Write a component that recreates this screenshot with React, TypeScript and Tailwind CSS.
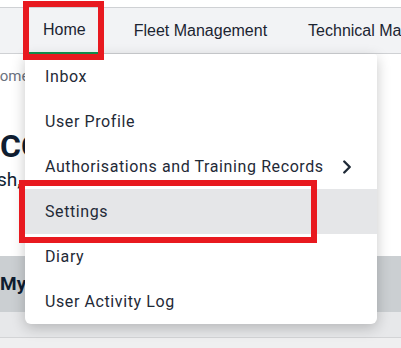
import { ChevronRight } from 'lucide-react';

const menuItems = [
  { label: 'Inbox' },
  { label: 'User Profile' },
  { label: 'Authorisations and Training Records', submenu: true },
  { label: 'Settings', active: true },
  { label: 'Diary' },
  { label: 'User Activity Log' },
];

export default function App() {
  return (
    <div className="relative h-[348px] w-[401px] overflow-hidden bg-white">
      {/* Top nav */}
      <div className="h-[7px] bg-white" />
      <nav className="flex h-[47px] items-center border-y border-[#cfd1d4] bg-[#f2f3f5] pl-[29px] font-['Liberation_Sans',Arial,sans-serif] text-[16px] text-[#1b2431]">
        <div className="-mb-px flex h-[46px] items-center border-b-2 border-[#12924f] px-[14px]">Home</div>
        <div className="ml-[20px] flex h-full items-center whitespace-nowrap px-[14px]">Fleet Management</div>
        <div className="ml-[13px] flex h-full items-center whitespace-nowrap px-[14px]">Technical Management</div>
      </nav>

      {/* Page content, partly hidden by the menu */}
      <main className="font-['Roboto',sans-serif] text-[#0f1d31]">
        <div className="-ml-[11px] mt-[12px] text-[15px] leading-[20px] text-[#6b7280]">Home</div>
        <h1 className="mt-[40px] whitespace-nowrap text-[32px] font-bold leading-[40px]">COMMAND</h1>
        <p className="-ml-[3px] whitespace-nowrap text-[19px] leading-[28px]">sh, welcome back</p>
        <div className="mt-[62px] flex h-[56px] items-center bg-[#cbcfd2] text-[19px] font-bold">My Inbox</div>
        <div className="h-[26px] border-b border-[#d3d4d6] bg-[#e7e8ea]" />
        <div className="h-[20px] bg-[#efeff0]" />
      </main>

      {/* Dropdown menu */}
      <div className="absolute left-[25px] top-[54px] w-[352px] rounded-b-[6px] rounded-tr-[3px] bg-white font-['Roboto',sans-serif] text-[16px] tracking-[0.6px] text-[#1f2a37] shadow-[0_4px_14px_rgba(0,0,0,0.22)]">
        {menuItems.map((item) => (
          <div
            key={item.label}
            className={`flex h-[45px] items-center justify-between pl-[20px] pr-[19px] ${item.active ? 'bg-[#e5e6e8]' : ''}`}
          >
            <span className="whitespace-nowrap">{item.label}</span>
            {item.submenu && <ChevronRight size={22} strokeWidth={2.6} className="text-[#1f2a37]" />}
          </div>
        ))}
      </div>

      {/* Annotation boxes */}
      <div className="absolute left-[23px] top-[1px] h-[59px] w-[81px] border-[6px] border-[#e8191f]" />
      <div className="absolute left-[19px] top-[180px] h-[63px] w-[298px] border-[6px] border-[#e8191f]" />
    </div>
  );
}
